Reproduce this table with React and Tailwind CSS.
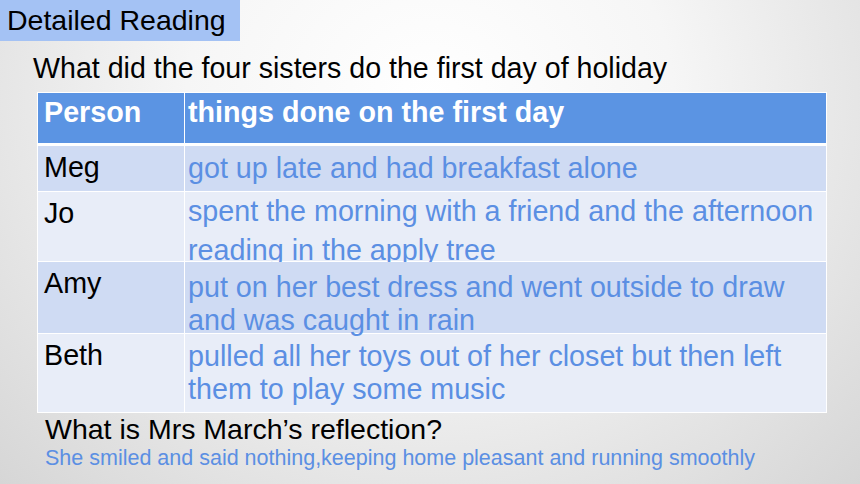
export default function App() {
  const rows = [
    { name: "Meg", h: "h-[45px]", bg: "bg-[#cfdbf3]", pt: "pt-[6px]", lines: ["got up late and had breakfast alone"], l2: "", z: "" },
    { name: "Jo", h: "h-[69px]", bg: "bg-[#e8edf8]", pt: "pt-[3px]", lines: ["spent the morning with a friend and the afternoon", "reading in the apply tree"], l2: "mt-[7px]", z: "" },
    { name: "Amy", h: "h-[71px]", bg: "bg-[#cfdbf3]", pt: "pt-[9px]", lines: ["put on her best dress and went outside to draw", "and was caught in rain"], l2: "mt-[1px]", z: "relative z-[1]" },
    { name: "Beth", h: "h-[78px]", bg: "bg-[#e8edf8]", pt: "pt-[6px]", lines: ["pulled all her toys out of her closet but then left", "them to play some music"], l2: "mt-[1px]", z: "" },
  ];
  return (
    <div className="w-[860px] h-[484px] overflow-hidden bg-[radial-gradient(ellipse_at_50%_20%,#ffffff_0%,#f6f6f6_40%,#d6d6d6_100%)] font-['Liberation_Sans',Arial,sans-serif]">
      <div className="w-[240px] h-[41px] bg-[#a4c2f4] pl-[7px] text-[28.5px] leading-[41px] text-black whitespace-nowrap">Detailed Reading</div>
      <div className="pl-[33px] mt-[11px] text-[28.6px] leading-[32px] text-black whitespace-nowrap">What did the four sisters do the first day of holiday</div>
      <div className="ml-[37px] mt-[8px] w-[790px] flex flex-col gap-[1px] bg-white p-[1px]">
        <div className="flex h-[50px] gap-[1px] mb-[2px]">
          <div className="w-[146px] bg-[#5b94e3] pl-[6px] pt-[3px] text-[28.7px] font-bold text-white leading-[32px]">Person</div>
          <div className="flex-1 bg-[#5b94e3] pl-[3px] pt-[3px] text-[28.7px] font-bold text-white leading-[32px] whitespace-nowrap">things done on the first day</div>
        </div>
        {rows.map((r) => (
          <div key={r.name} className={`flex gap-[1px] ${r.h} ${r.z}`}>
            <div className={`w-[146px] ${r.bg} pl-[6px] pt-[5px] text-[28.7px] leading-[32px] text-black`}>{r.name}</div>
            <div className={`flex-1 ${r.bg} pl-[3px] ${r.pt} text-[28.7px] leading-[32px] text-[#5b8fe3] whitespace-nowrap`}>
              {r.lines.map((l, i) => (
                <div key={l} className={i === 1 ? r.l2 : ""}>{l}</div>
              ))}
            </div>
          </div>
        ))}
      </div>
      <div className="pl-[45px] text-[28.5px] leading-[32px] text-black whitespace-nowrap">What is Mrs March’s reflection?</div>
      <div className="pl-[45px] mt-[1px] text-[21.5px] leading-[24px] text-[#5b8fe3] whitespace-nowrap">She smiled and said nothing,keeping home pleasant and running smoothly</div>
    </div>
  );
}
